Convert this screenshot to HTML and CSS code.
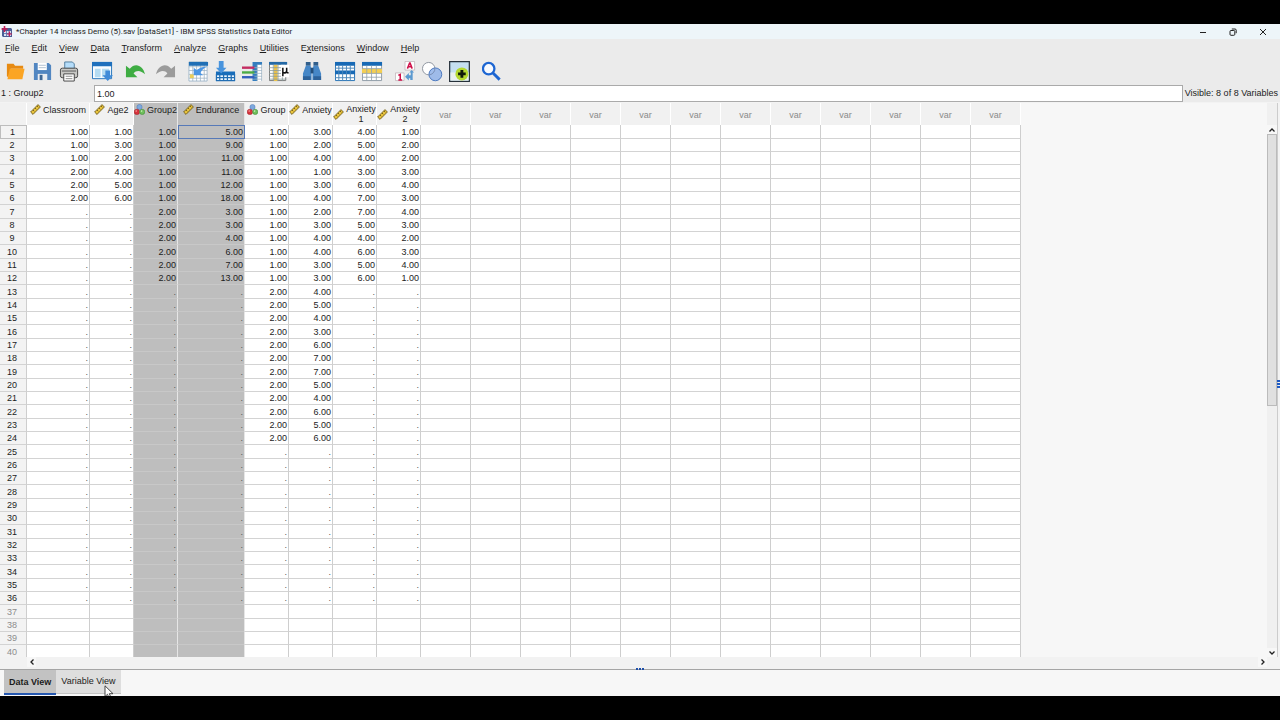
FILE: index.html
```html
<!DOCTYPE html>
<html lang="en">
<head>
<meta charset="utf-8">
<title>*Chapter 14 Inclass Demo (5).sav [DataSet1] - IBM SPSS Statistics Data Editor</title>
<link rel="stylesheet" href="styles.css">
</head>
<body>
<svg class="defs" aria-hidden="true">
  <symbol id="ruler" viewBox="0 0 11 11"><path d="M.6 8 8 .6 10.4 3 3 10.4z" fill="#e8c33c" stroke="#5f4d12" stroke-width=".8"/><path d="m3 6 1.300 1.300M5 4l1.300 1.300M7 2l1.300 1.300" stroke="#5f4d12" stroke-width=".8"/></symbol>
  <symbol id="nominal" viewBox="0 0 11 11"><circle cx="5.500" cy="3" r="2.600" fill="#7fa9de" stroke="#4a79b5" stroke-width=".5"/><circle cx="2.900" cy="7.900" r="2.700" fill="#d8333c" stroke="#9c1c24" stroke-width=".5"/><circle cx="8.200" cy="7.900" r="2.600" fill="#6fc05c" stroke="#3b8130" stroke-width=".5"/><circle cx="2.200" cy="7" r=".8" fill="#f4a7a7"/><circle cx="7.600" cy="7.100" r=".8" fill="#c8efb8"/></symbol>
</svg>
<div class="window">
  <header class="titlebar">
    <svg class="app-icon" viewBox="0 0 12 12"><path d="M1 2h9l1 1v8H2l-1-1z" fill="#4a5f96"/><path d="M3 5h7v5H3z" fill="#d9e3f2"/><path d="M3 7.500h7M5.500 5v5M8 5v5" stroke="#5267a5" stroke-width=".8"/><path d="M3.500 0v6M.5 3h6" stroke="#c21d55" stroke-width="1.600"/><path d="M8.500 5.500v5M6 8h5" stroke="#c21d55" stroke-width="1.200"/></svg>
    <h1 class="title">*Chapter 14 Inclass Demo (5).sav [DataSet1] - IBM SPSS Statistics Data Editor</h1>
    <div class="window-buttons">
      <button aria-label="Minimize"><svg viewBox="0 0 8 8"><path d="M1 4.500h6"/></svg></button>
      <button aria-label="Restore"><svg viewBox="0 0 8 8"><rect x="1" y="2.500" width="4.800" height="4.800" rx="1"/><path d="M2.800 1h3.200q1.200 0 1.200 1.200v3"/></svg></button>
      <button aria-label="Close"><svg viewBox="0 0 8 8"><path d="m1 1 6 6M7 1 1 7"/></svg></button>
    </div>
  </header>
  <nav class="menubar">
    <button><u>F</u>ile</button><button><u>E</u>dit</button><button><u>V</u>iew</button><button><u>D</u>ata</button><button><u>T</u>ransform</button><button><u>A</u>nalyze</button><button><u>G</u>raphs</button><button><u>U</u>tilities</button><button>E<u>x</u>tensions</button><button><u>W</u>indow</button><button><u>H</u>elp</button>
  </nav>
  <div class="toolbar" role="toolbar">
    <div class="tools">
      <button aria-label="Open"><svg viewBox="0 0 22 22"><path d="M2 3h7l1.500 2H19v3H6L3.500 17 2 16z" fill="#e78a12"/><path d="M5 8h15.500l-2.300 11H2.500z" fill="#fba524"/></svg></button>
      <button aria-label="Save"><svg viewBox="0 0 22 22"><path d="M2 2h15.500L20 4.500V20H2z" fill="#5186c1"/><path d="M6 2h9.500v7.500H6z" fill="#fff"/><path d="M7 4.500h7.500M7 7h7.500" stroke="#aebfd0"/><path d="M6 13.500h10V20H6z" fill="#e9edf2"/><path d="M8 14.500h3V20H8z" fill="#3e6795"/></svg></button>
      <button aria-label="Print"><svg viewBox="0 0 22 22"><path d="M6 8V1h8l2 2v5z" fill="#b5ddfa" stroke="#527d9d"/><rect x="1.500" y="7.500" width="18" height="10" rx="2" fill="#c8c8c5" stroke="#444"/><path d="M3 10.500h15" stroke="#555"/><path d="M5 13.500h11V21H5z" fill="#fff" stroke="#444"/><path d="M7 16h7M7 18.500h7" stroke="#888"/></svg></button>
    </div>
    <div class="tools">
      <button aria-label="Recall dialog"><svg viewBox="0 0 22 22"><path d="M.5 1.500h20v17H.5z" fill="#f8fcff" stroke="#2473bb"/><path d="M0 1h21v4.500H0z" fill="#1f70bd"/><path d="M3 8h6v9H3zM10.500 8H18v9h-7.500z" fill="#b5dcf2"/><path d="M14 10h5v5h3l-5.500 6-5.500-6h3z" fill="#408bd8"/></svg></button>
    </div>
    <div class="tools history">
      <button aria-label="Undo"><svg viewBox="0 0 22 22"><path d="M1 5v12h12L9 13c3-4 8-3 12 1C19 5 11 1 5 8z" fill="#3fad43"/></svg></button>
      <button aria-label="Redo"><svg viewBox="0 0 22 22"><path d="M21 5v12H9l4-4c-3-4-8-3-12 1C3 5 11 1 17 8z" fill="#9b9b9b"/></svg></button>
    </div>
    <div class="tools">
      <button aria-label="Go to case"><svg viewBox="0 0 22 22"><path d="M1 1h19v20H1z" fill="#fff" stroke="#83a2bd" stroke-width=".7"/><path d="M1 6h19M1 10h19M1 14h19M1 18h19M5 1v20M9 1v20M13 1v20M17 1v20" stroke="#9db1c2" stroke-width=".8"/><path d="M1 1h20v4H1z" fill="#206fb5"/><path d="M2 14h4v4H2z" fill="#ebce59"/><path d="m6 15V7l3 2.500q5-4 11-3.500-5 2-7 6.500l3 2.500z" fill="#4b96e4"/></svg></button>
      <button aria-label="Go to variable"><svg viewBox="0 0 22 22"><path d="M1 12h20v9H1z" fill="#eff8ff"/><path d="M1 11h20v4H1z" fill="#186dba"/><path d="M1.500 14v7M5 14v7M9 14v7M13 14v7M17 14v7M20.500 14v7M1 17.500h20M1 20.500h20" stroke="#226eb3" stroke-width="1.300"/><path d="M4 0h5v7h3l-5.500 6L1 7h3z" fill="#4994dd"/></svg></button>
      <button aria-label="Variables"><svg viewBox="0 0 22 22"><path d="M11 1h10v20H11z" fill="#fff"/><path d="M11 1h10v3H11zM11 4h5v17h-5z" fill="#347dbe"/><path d="M11 7h10M11 10h10M11 13h10M11 16h10M11 19h10M16 4v17M20.500 4v17" stroke="#a0b5c5" stroke-width=".8"/><path d="M0 7h13" stroke="#c42d62" stroke-width="2.500"/><path d="M0 12h13" stroke="#4cab47" stroke-width="2.500"/><path d="M0 17h13" stroke="#345fbd" stroke-width="2.500"/></svg></button>
      <button aria-label="Descriptive statistics"><svg viewBox="0 0 22 22"><path d="M.5 1.500h17v19H.5z" fill="#fff" stroke="#777"/><path d="M0 1h19v3H0z" fill="#2469a6"/><path d="M5 4h4v17H5z" fill="#ebc34c"/><path d="M0 7h18M0 10h18M0 13h18M0 16h18M0 19h18M4.500 4v17M9.500 4v17M14 4v17" stroke="#899" stroke-width=".8"/><path d="M12.500 4H21v13h-8.500z" fill="#fff"/><path d="M14.500 16V7m0 5q3.500 1.500 4-2V7m0 3v2l2 .5" fill="none" stroke="#111" stroke-width="1.600"/></svg></button>
    </div>
    <div class="tools">
      <button aria-label="Find"><svg viewBox="0 0 22 22"><path d="M4 1h5v4H4zM12 1h5v4h-5z" fill="#315f8c"/><path d="M4 5h5l1 5v10H1v-7zM12 5h5l3 8v7h-9V10z" fill="#4687c7"/><path d="M9 7h3v6H9z" fill="#244f7b"/><path d="M1 16h8v4H1zM12 16h8v4h-8z" fill="#2d629a"/></svg></button>
    </div>
    <div class="tools">
      <button aria-label="Split file"><svg viewBox="0 0 22 22"><path d="M.5 1.500h20v19H.5z" fill="#fff" stroke="#2370b4"/><path d="M0 1h21v4H0zM0 10h21v4H0z" fill="#1769b5"/><path d="M0 7.500h21M0 17.500h21M4 5v16M8 5v16M12 5v16M16 5v16" stroke="#4c86b9"/></svg></button>
      <button aria-label="Select cases"><svg viewBox="0 0 22 22"><path d="M.5 1.500h20v19H.5z" fill="#fff" stroke="#8f9ba6"/><path d="M0 1h21v4H0z" fill="#1769b5"/><path d="M0 8h21v5H0z" fill="#f5cf51"/><path d="M0 8h21M0 13h21M0 17h21M5 5v16M10 5v16M15 5v16" stroke="#97a5ad" stroke-width=".9"/></svg></button>
    </div>
    <div class="tools">
      <button aria-label="Value labels"><svg viewBox="0 0 22 22"><path d="M10.500.5h10v9h-10zM.5 12.500h9v8h-9z" fill="#fff" stroke="#b9a9af" stroke-width=".7"/><path d="m13 8 2.300-6h.5L18 8m-4-2h3M3.500 15l2-1v6m-2 0h4" fill="none" stroke="#cf1049" stroke-width="1.600"/><path d="m10.500 16.500 4-4V15h2v-3h-1.500l2.500-2.500L20 12h-1.500v8H16v-2h-1.500v2.500z" fill="#5c9ad0"/></svg></button>
      <button aria-label="Use variable sets"><svg viewBox="0 0 22 22"><circle cx="7" cy="8" r="6.500" fill="#fff" stroke="#8d949e"/><circle cx="14" cy="14" r="6.700" fill="#90b3e9" fill-opacity=".85" stroke="#4876bd"/><path d="M7.300 14.500A6.500 6.500 0 0 0 13.500 7.500" fill="none" stroke="#7b91b6"/></svg></button>
      <button aria-label="Show all variables"><svg viewBox="0 0 22 22"><path d="M.7.700h20.600v20.600H.7z" fill="#c5dff0" stroke="#26313a" stroke-width="1.300"/><path d="M1.500 12h19v8.500h-19z" fill="#eaf0ee"/><circle cx="13.500" cy="13.500" r="6.800" fill="#b4d830"/><path d="M13.500 9.500v8M9.500 13.500h8" stroke="#101909" stroke-width="3"/></svg></button>
    </div>
    <div class="tools">
      <button aria-label="Search"><svg viewBox="0 0 22 22"><circle cx="7" cy="8" r="6" fill="#f7faff" stroke="#1d66d2" stroke-width="2.400"/><path d="m11.500 12.500 7 7" stroke="#1d66d2" stroke-width="3"/></svg></button>
    </div>
  </div>
  <div class="cell-editor">
    <label for="cell-value">1 : Group2</label>
    <input id="cell-value" type="text" value="1.00">
    <span class="visible-count">Visible: 8 of 8 Variables</span>
  </div>
  <main class="sheet">
    <div class="viewport">
      <table class="grid">
        <colgroup><col class="c-row"><col class="c-wide"><col class="c-std"><col class="c-std"><col class="c-endurance"><col class="c-std" span="4"><col class="c-var" span="12"></colgroup>
        <thead><tr id="head"></tr></thead>
        <tbody id="rows"></tbody>
      </table>
    </div>
    <div class="vscroll">
      <button aria-label="Scroll up"><svg viewBox="0 0 8 8"><path d="m1.500 5.500 2.500-2.500 2.500 2.500"/></svg></button>
      <div class="track"><div class="thumb"></div></div>
      <button aria-label="Scroll down"><svg viewBox="0 0 8 8"><path d="m1.500 2.500 2.500 2.500 2.500-2.500"/></svg></button>
    </div>
    <div class="hscroll">
      <button aria-label="Scroll left"><svg viewBox="0 0 8 8"><path d="M5.500 1.500 3 4l2.500 2.500"/></svg></button>
      <button aria-label="Scroll right"><svg viewBox="0 0 8 8"><path d="M2.500 1.500 5 4 2.500 6.500"/></svg></button>
    </div>
    <div class="splitter-v"><i></i><i></i><i></i></div>
    <div class="splitter-h"><i></i><i></i><i></i></div>
  </main>
  <footer class="tabs" role="tablist">
    <button class="tab active" role="tab" aria-selected="true">Data View</button>
    <button class="tab" role="tab" aria-selected="false">Variable View<svg class="cursor" viewBox="0 0 10 14"><path d="M1 .8v10.700l2.500-2.200 1.700 4 1.800-.8-1.700-3.800H9z" fill="#fff" stroke="#333" stroke-width=".9"/></svg></button>
  </footer>
</div>
<script src="grid.js"></script>
</body>
</html>
```

FILE: styles.css
```css
* { box-sizing: border-box; }

body {
  margin: 0;
  height: 100vh;
  padding: 24px 0;
  background: #000;
  color: #1c1c1c;
  font: 9px/11px "Liberation Sans", Arial, sans-serif;
}

button {
  border: 0;
  padding: 0;
  background: none;
  color: inherit;
  font: inherit;
}

svg { display: block; }
.defs { position: absolute; width: 0; height: 0; }

.window {
  display: flex;
  flex-direction: column;
  height: 100%;
  overflow: hidden;
  background: #ebebeb;
}

.titlebar {
  display: flex;
  align-items: center;
  gap: 3px;
  height: 15px;
  padding-left: 1px;
  background: #edf5f9;
}
.app-icon { width: 12px; height: 12px; }
.title {
  flex: 1;
  margin: 0;
  font: 8px/14px Roboto, "Noto Sans", sans-serif;
}
.window-buttons { display: flex; gap: 22px; padding-right: 13px; }
.window-buttons svg {
  width: 8px;
  height: 8px;
  fill: none;
  stroke: #222;
  stroke-width: 1;
}

.menubar {
  display: flex;
  gap: 12px;
  padding: 4px 5px 3px;
}
.menubar u { text-underline-offset: 1px; }

.toolbar {
  display: flex;
  gap: 11px;
  height: 28px;
  padding: 3px 5px;
}
.tools { display: flex; gap: 5px; }
.history { gap: 8px; }
.tools svg { width: 21px; height: 21px; margin-right: 1px; }

.cell-editor {
  display: flex;
  align-items: center;
  height: 17px;
}
.cell-editor label { width: 94px; padding-left: 1px; }
.cell-editor input {
  flex: 1;
  min-width: 0;
  height: 17px;
  padding: 0 2px;
  border: 1px solid #aaa;
  background: #fff;
  color: inherit;
  font: inherit;
}
.visible-count { padding: 0 2px; }

.sheet {
  position: relative;
  flex: 1;
  min-height: 0;
  display: grid;
  grid-template-columns: 1fr 11px;
  grid-template-rows: 1fr 12px;
  padding: 1px 2px 0 0;
  border-bottom: 1px solid #a5a5a5;
  background: #f3f3f3;
}
.viewport { overflow: hidden; background: #f7f7f7; }

.grid {
  table-layout: fixed;
  width: 1021px;
  border-spacing: 0;
  background: #fff;
}
.c-row { width: 27px; }
.c-wide { width: 63px; }
.c-std { width: 44px; }
.c-endurance { width: 67px; }
.c-var { width: 50px; }

.grid thead th {
  height: 22px;
  padding: 1px 0 0;
  border-right: 1px solid #fff;
  background: #f1f1f1;
  font-weight: normal;
  line-height: 10px;
  vertical-align: top;
}
.name {
  display: flex;
  align-items: center;
  justify-content: center;
  gap: 2px;
}
.name svg { flex: none; width: 11px; height: 11px; }
.grid thead .unused { color: #8a8a8a; vertical-align: middle; }

.grid tbody tr { height: 13px; }
.grid tbody tr:nth-child(3n + 1) { height: 14px; }
.grid td,
.grid tbody th {
  padding: 0 1px 0 0;
  border-right: 1px solid #cecece;
  border-bottom: 1px solid #d3d3d3;
  text-align: right;
  line-height: 12px;
}
.grid tbody th {
  padding-right: 2px;
  background: #f3f3f3;
  font-weight: normal;
  text-align: center;
}
.grid tbody tr:first-child th { border: 1px solid #bdbdbd; }
.grid tbody .beyond { color: #8c8c8c; }
.grid td.missing { color: #555; }
.grid thead .selected { background: #bebebe; border-right-color: #e6e6e6; }
.grid td.selected {
  background: #bebebe;
  border-right-color: #e6e6e6;
  border-bottom-color: #c8c8c8;
}
.grid td.current { outline: 1px solid #5679b8; outline-offset: -1px; }

.vscroll {
  display: flex;
  flex-direction: column;
  padding-top: 22px;
  border-right: 1px solid #ccc;
  background: #f0f0f0;
}
.vscroll svg,
.hscroll svg {
  width: 8px;
  height: 8px;
  margin: auto;
  fill: none;
  stroke: #222;
  stroke-width: 1.3;
}
.vscroll button { height: 9px; background: #f7f7f7; }
.track { flex: 1; }
.thumb { height: 53%; border: 1px solid #bbb; background: #e0e0e0; }

.hscroll {
  display: flex;
  justify-content: space-between;
  padding: 0 0 2px 27px;
  background: #f2f2f2;
}
.hscroll button { width: 9px; background: #f7f7f7; }

.splitter-v,
.splitter-h { position: absolute; display: flex; gap: 1px; }
.splitter-v { right: 0; top: 49%; flex-direction: column; }
.splitter-h { left: 50%; bottom: -1px; transform: translateX(-50%); }
.splitter-v i { width: 3px; height: 2px; background: #1f5bc4; }
.splitter-h i { width: 2px; height: 2px; background: #1f4fa8; }

.tabs {
  display: flex;
  align-items: flex-start;
  height: 26px;
  padding-left: 4px;
  background: #f7f7f7;
}
.tab {
  position: relative;
  height: 24px;
  padding: 0 5px;
  border-bottom: 1px solid #c4c4c4;
  background: #dedede;
}
.tab.active {
  height: 25px;
  padding-top: 2px;
  border-bottom: 2px solid #2457b0;
  background: #c2c2c2;
  font-weight: bold;
}
.cursor { position: absolute; right: 7px; top: 15px; width: 10px; height: 14px; }
```

FILE: grid.js
```javascript
const ROWS = 40;
const CASES = 36;
const UNUSED_COLUMNS = 12;

const variables = [
  { name: "Classroom", icon: "ruler", values: [1, 1, 1, 2, 2, 2] },
  { name: "Age2", icon: "ruler", values: [1, 3, 2, 4, 5, 6] },
  { name: "Group2", icon: "nominal", selected: true, values: [1, 1, 1, 1, 1, 1, 2, 2, 2, 2, 2, 2] },
  { name: "Endurance", icon: "ruler", selected: true, values: [5, 9, 11, 11, 12, 18, 3, 3, 4, 6, 7, 13] },
  { name: "Group", icon: "nominal", values: [...Array(12).fill(1), ...Array(12).fill(2)] },
  { name: "Anxiety", icon: "ruler", values: [3, 2, 4, 1, 3, 4, 2, 3, 4, 4, 3, 3, 4, 5, 4, 3, 6, 7, 7, 5, 4, 6, 5, 6] },
  { name: "Anxiety<br>1", icon: "ruler", values: [4, 5, 4, 3, 6, 7, 7, 5, 4, 6, 5, 6] },
  { name: "Anxiety<br>2", icon: "ruler", values: [1, 2, 2, 3, 4, 3, 4, 3, 2, 3, 4, 1] }
];

document.getElementById("head").innerHTML =
  "<th></th>" +
  variables.map(v =>
    `<th scope="col" class="${v.selected ? "selected" : ""}"><div class="name"><svg><use href="#${v.icon}"/></svg><span>${v.name}</span></div></th>`
  ).join("") +
  '<th scope="col" class="unused">var</th>'.repeat(UNUSED_COLUMNS);

let html = "";
for (let r = 0; r < ROWS; r++) {
  html += `<tr><th scope="row" class="${r < CASES ? "" : "beyond"}">${r + 1}</th>`;
  for (const v of variables) {
    const classes = [];
    let text = "";
    if (v.selected) classes.push("selected");
    if (r === 0 && v.name === "Endurance") classes.push("current");
    if (r < v.values.length) {
      text = v.values[r].toFixed(2);
    } else if (r < CASES) {
      text = ".";
      classes.push("missing");
    }
    html += `<td class="${classes.join(" ")}">${text}</td>`;
  }
  html += "<td></td>".repeat(UNUSED_COLUMNS) + "</tr>";
}
document.getElementById("rows").innerHTML = html;
```
